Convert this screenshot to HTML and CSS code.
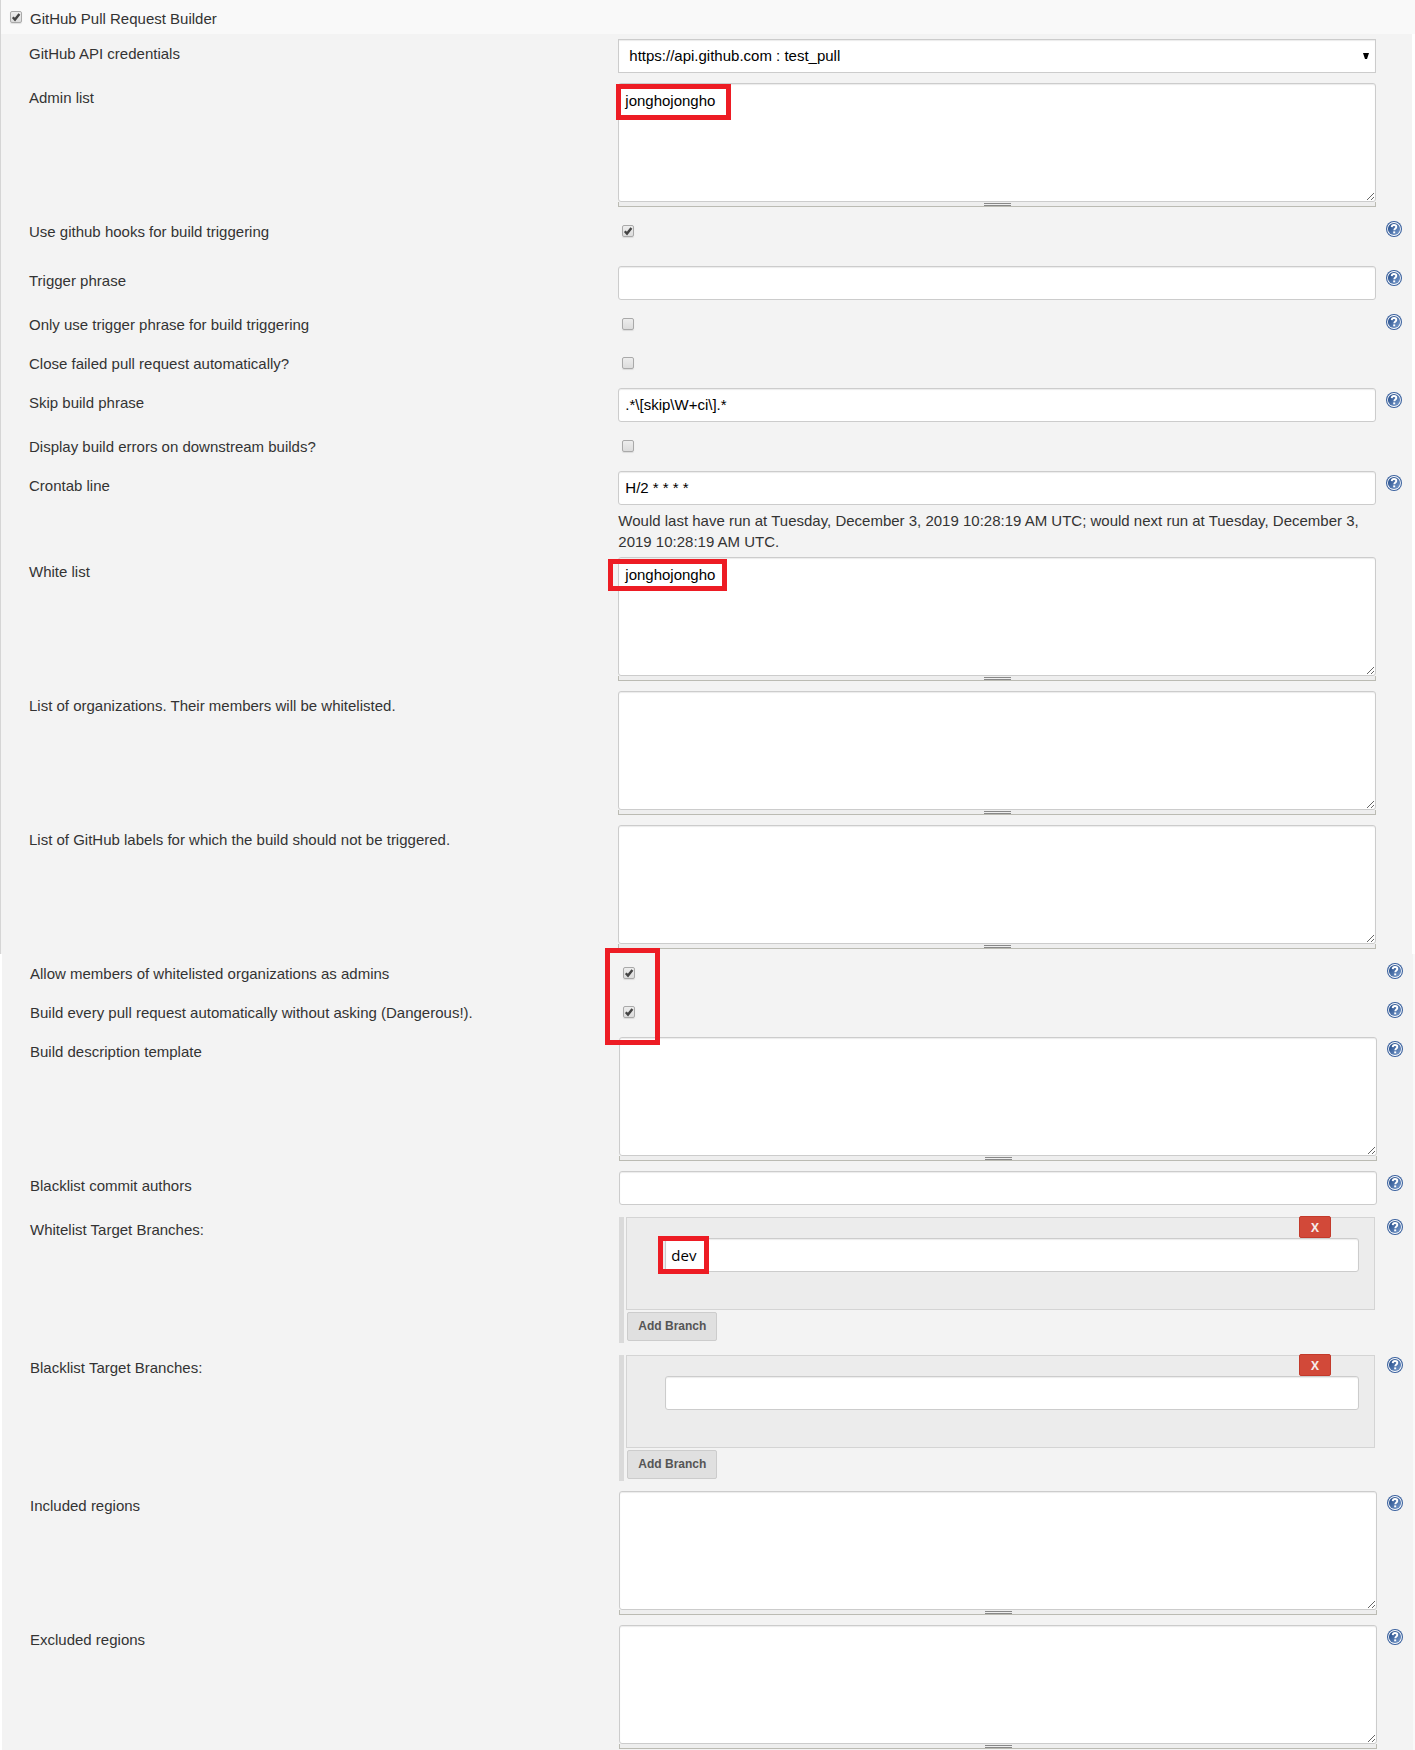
FILE: index.html
```
<!DOCTYPE html>
<html lang="en">
<head>
    <meta charset="UTF-8">
    <meta name="viewport" content="width=device-width, initial-scale=1.0">
    <title>GitHub Pull Request Builder</title>
    <link rel="stylesheet" href="styles.css">
</head>
<body>

    <!-- shared icon -->
    <svg class="defs" width="0" height="0" aria-hidden="true">
        <defs>
            <linearGradient id="blue" x1="0" y1="0" x2="1" y2="1">
                <stop offset="0" stop-color="#1d4583"/>
                <stop offset="1" stop-color="#7c9fd0"/>
            </linearGradient>
            <symbol id="help" viewBox="0 0 16 16">
                <circle cx="8" cy="8" r="8" fill="#3a619e"/>
                <circle cx="8" cy="8" r="6.9" fill="#fff"/>
                <circle cx="8" cy="8" r="6.1" fill="url(#blue)"/>
                <path d="M5.7 6.1C5.8 4.5 6.8 4 8 4s2.3.7 2.3 1.9c0 1.5-2 1.7-2 3.4" fill="none" stroke="#fff" stroke-width="1.9"/>
                <rect x="7.2" y="10.4" width="2" height="1.9" fill="#fff"/>
            </symbol>
        </defs>
    </svg>

    <form class="builder">

        <header class="head">
            <input class="check" type="checkbox" id="ghprb" checked>
            <label for="ghprb">GitHub Pull Request Builder</label>
        </header>

        <section class="part">
            <div class="row">
                <label class="name" for="credentials">GitHub API credentials</label>
                <div class="setting">
                    <select class="box select" id="credentials">
                        <option>https://api.github.com : test_pull</option>
                    </select>
                </div>
            </div>
            <div class="row">
                <label class="name" for="admin">Admin list</label>
                <div class="setting">
                    <textarea class="box area" id="admin" spellcheck="false">jonghojongho</textarea>
                    <div class="handle"></div>
                    <span class="mark mark-admin"></span>
                </div>
            </div>
            <div class="row row-hooks">
                <label class="name" for="hooks">Use github hooks for build triggering</label>
                <div class="setting"><input class="check" type="checkbox" id="hooks" checked></div>
                <a class="help" href="#" aria-label="Help"><svg width="16" height="16"><use href="#help"/></svg></a>
            </div>
            <div class="row">
                <label class="name" for="trigger">Trigger phrase</label>
                <div class="setting"><input class="box" type="text" id="trigger"></div>
                <a class="help" href="#" aria-label="Help"><svg width="16" height="16"><use href="#help"/></svg></a>
            </div>
            <div class="row">
                <label class="name" for="only">Only use trigger phrase for build triggering</label>
                <div class="setting"><input class="check" type="checkbox" id="only"></div>
                <a class="help" href="#" aria-label="Help"><svg width="16" height="16"><use href="#help"/></svg></a>
            </div>
            <div class="row">
                <label class="name" for="close">Close failed pull request automatically?</label>
                <div class="setting"><input class="check" type="checkbox" id="close"></div>
            </div>
            <div class="row">
                <label class="name" for="skip">Skip build phrase</label>
                <div class="setting"><input class="box" type="text" id="skip" value=".*\[skip\W+ci\].*"></div>
                <a class="help" href="#" aria-label="Help"><svg width="16" height="16"><use href="#help"/></svg></a>
            </div>
            <div class="row">
                <label class="name" for="errors">Display build errors on downstream builds?</label>
                <div class="setting"><input class="check" type="checkbox" id="errors"></div>
            </div>
            <div class="row">
                <label class="name" for="cron">Crontab line</label>
                <div class="setting setting-info">
                    <input class="box" type="text" id="cron" value="H/2 * * * *">
                    <p class="info">Would last have run at Tuesday, December 3, 2019 10:28:19 AM UTC; would next run at Tuesday, December 3, 2019 10:28:19 AM UTC.</p>
                </div>
                <a class="help" href="#" aria-label="Help"><svg width="16" height="16"><use href="#help"/></svg></a>
            </div>
            <div class="row">
                <label class="name" for="white">White list</label>
                <div class="setting">
                    <textarea class="box area" id="white" spellcheck="false">jonghojongho</textarea>
                    <div class="handle"></div>
                    <span class="mark mark-white"></span>
                </div>
            </div>
            <div class="row">
                <label class="name" for="orgs">List of organizations. Their members will be whitelisted.</label>
                <div class="setting">
                    <textarea class="box area" id="orgs"></textarea>
                    <div class="handle"></div>
                </div>
            </div>
            <div class="row">
                <label class="name" for="labels">List of GitHub labels for which the build should not be triggered.</label>
                <div class="setting">
                    <textarea class="box area" id="labels"></textarea>
                    <div class="handle"></div>
                </div>
            </div>
        </section>

        <section class="part part-lower">
            <div class="row">
                <label class="name" for="members">Allow members of whitelisted organizations as admins</label>
                <div class="setting">
                    <input class="check" type="checkbox" id="members" checked>
                    <span class="mark mark-checks"></span>
                </div>
                <a class="help" href="#" aria-label="Help"><svg width="16" height="16"><use href="#help"/></svg></a>
            </div>
            <div class="row">
                <label class="name" for="every">Build every pull request automatically without asking (Dangerous!).</label>
                <div class="setting"><input class="check" type="checkbox" id="every" checked></div>
                <a class="help" href="#" aria-label="Help"><svg width="16" height="16"><use href="#help"/></svg></a>
            </div>
            <div class="row">
                <label class="name" for="template">Build description template</label>
                <div class="setting">
                    <textarea class="box area" id="template"></textarea>
                    <div class="handle"></div>
                </div>
                <a class="help" href="#" aria-label="Help"><svg width="16" height="16"><use href="#help"/></svg></a>
            </div>
            <div class="row">
                <label class="name" for="authors">Blacklist commit authors</label>
                <div class="setting"><input class="box" type="text" id="authors"></div>
                <a class="help" href="#" aria-label="Help"><svg width="16" height="16"><use href="#help"/></svg></a>
            </div>
            <div class="row">
                <label class="name" for="white-branch">Whitelist Target Branches:</label>
                <div class="setting">
                    <div class="branches">
                        <div class="branch">
                            <button class="delete" type="button">X</button>
                            <input class="box box-branch" type="text" id="white-branch" value="dev">
                            <span class="mark mark-branch"></span>
                        </div>
                        <button class="add" type="button">Add Branch</button>
                    </div>
                </div>
                <a class="help" href="#" aria-label="Help"><svg width="16" height="16"><use href="#help"/></svg></a>
            </div>
            <div class="row">
                <label class="name" for="black-branch">Blacklist Target Branches:</label>
                <div class="setting">
                    <div class="branches">
                        <div class="branch">
                            <button class="delete" type="button">X</button>
                            <input class="box box-branch" type="text" id="black-branch">
                        </div>
                        <button class="add" type="button">Add Branch</button>
                    </div>
                </div>
                <a class="help" href="#" aria-label="Help"><svg width="16" height="16"><use href="#help"/></svg></a>
            </div>
            <div class="row">
                <label class="name" for="included">Included regions</label>
                <div class="setting">
                    <textarea class="box area" id="included"></textarea>
                    <div class="handle"></div>
                </div>
                <a class="help" href="#" aria-label="Help"><svg width="16" height="16"><use href="#help"/></svg></a>
            </div>
            <div class="row row-last">
                <label class="name" for="excluded">Excluded regions</label>
                <div class="setting">
                    <textarea class="box area" id="excluded"></textarea>
                    <div class="handle"></div>
                </div>
                <a class="help" href="#" aria-label="Help"><svg width="16" height="16"><use href="#help"/></svg></a>
            </div>
        </section>

    </form>

</body>
</html>
```
FILE: styles.css
```
* {
    box-sizing: border-box;
}

body {
    margin: 0;
    background-color: #ffffff;
    font-family: "Liberation Sans", Arial, sans-serif;
    font-size: 15px;
    line-height: 20px;
    color: #333333;
}

.defs {
    position: absolute;
}

.head {
    display: flex;
    gap: 8px;
    height: 34px;
    padding: 9px 0 0 9px;
    border-left: 1px solid #d5d5d5;
    background-color: #f9f9f9;
}

.head .check {
    margin-top: 2px;
}

.part {
    margin-right: 3px;
    padding-left: 28px;
    border-left: 1px solid #d5d5d5;
    background-color: #f3f3f3;
}

.part-lower {
    margin-right: 0;
    border-left: 2px solid #ffffff;
    border-right: 2px solid #f9f9f9;
}

.row {
    display: grid;
    grid-template-columns: 7fr 9fr 36px;
    min-height: 39px;
}

.row-hooks {
    min-height: 49px;
}

.row-last .setting {
    padding-bottom: 1px;
}

.name {
    padding-top: 10px;
}

.setting {
    position: relative;
    padding: 5px 0;
}

.setting-info {
    padding-bottom: 0;
}

.setting > .check {
    margin: 8px 0 0 4px;
}

.help {
    padding: 9px 0 0 10px;
}

.help svg {
    display: block;
}

/* inputs */

.box {
    display: block;
    width: 100%;
    height: 34px;
    margin: 0;
    padding: 5px 6px 7px;
    border: 1px solid #cccccc;
    border-radius: 3px;
    background-color: #ffffff;
    box-shadow: inset 0 1px 1px rgba(0,0,0,.08);
    font-family: inherit;
    font-size: 15px;
    line-height: 20px;
    color: #000000;
}

.select {
    appearance: none;
    padding: 6px 10px;
    border-radius: 0;
    background-image: url("data:image/svg+xml,%3Csvg xmlns='http://www.w3.org/2000/svg' width='6' height='6'%3E%3Cpath d='M0 0h6L4 6H2z'/%3E%3C/svg%3E");
    background-repeat: no-repeat;
    background-position: right 6px center;
}

.area {
    height: 119px;
    padding-top: 7px;
    overflow: hidden;
    resize: vertical;
}

.handle {
    height: 5px;
    border: 1px solid #bbbbb3;
    border-top: 0;
    background-color: #eeeeee;
    overflow: hidden;
}

.handle::before {
    content: "";
    display: block;
    width: 27px;
    height: 1px;
    margin: 1px auto 0;
    border-top: 1px solid #888888;
    border-bottom: 1px solid #888888;
}

.check {
    appearance: none;
    display: block;
    width: 12px;
    height: 12px;
    margin: 0;
    border: 1px solid #a9a9a9;
    border-radius: 2px;
    background-image: linear-gradient(#ededed, #dcdcdc);
    box-shadow: 0 1px 1px rgba(0,0,0,.1);
}

.check:checked {
    background-image: url("data:image/svg+xml,%3Csvg xmlns='http://www.w3.org/2000/svg' width='10' height='10'%3E%3Cpath d='M1.8 5.2L4 7.6L8.4 2' fill='none' stroke='%23444' stroke-width='2.4'/%3E%3C/svg%3E"), linear-gradient(#ededed, #dcdcdc);
}

.info {
    margin: 5px 0 0;
    line-height: 21px;
}

/* branch lists */

.branches {
    margin-top: 2px;
    padding: 0 0 2px 2px;
    border-left: 5px solid #dadada;
}

.branch {
    position: relative;
    height: 93px;
    margin-right: 2px;
    padding: 20px 15px 0 38px;
    border: 1px solid #d4d4d4;
    background-color: #ececec;
}

.box-branch {
    padding: 6px 5px;
    font-family: "Open Sans", sans-serif;
}

.delete {
    position: absolute;
    top: -2px;
    right: 43px;
    width: 32px;
    height: 22px;
    padding: 0;
    border: 1px solid #c33a2b;
    border-radius: 2px;
    background-color: #d24939;
    font-family: "Open Sans", sans-serif;
    font-size: 12px;
    font-weight: bold;
    color: #f5eceb;
}

.add {
    display: block;
    height: 29px;
    margin: 2px 0 0 1px;
    padding: 0 10px 2px;
    border: 1px solid #cccccc;
    border-radius: 2px;
    background-color: #e0e0e0;
    font-family: inherit;
    font-size: 12px;
    font-weight: bold;
    color: #555555;
}

/* red frames drawn over the form */

.mark {
    position: absolute;
    border: 5px solid #ed1c24;
    pointer-events: none;
}

.mark-admin {
    top: 6px;
    left: -2px;
    width: 115px;
    height: 36px;
}

.mark-white {
    top: 7px;
    left: -10px;
    width: 119px;
    height: 32px;
}

.mark-checks {
    top: -6px;
    left: -14px;
    z-index: 1;
    width: 55px;
    height: 97px;
}

.mark-branch {
    top: 18px;
    left: 31px;
    width: 51px;
    height: 38px;
}
```
